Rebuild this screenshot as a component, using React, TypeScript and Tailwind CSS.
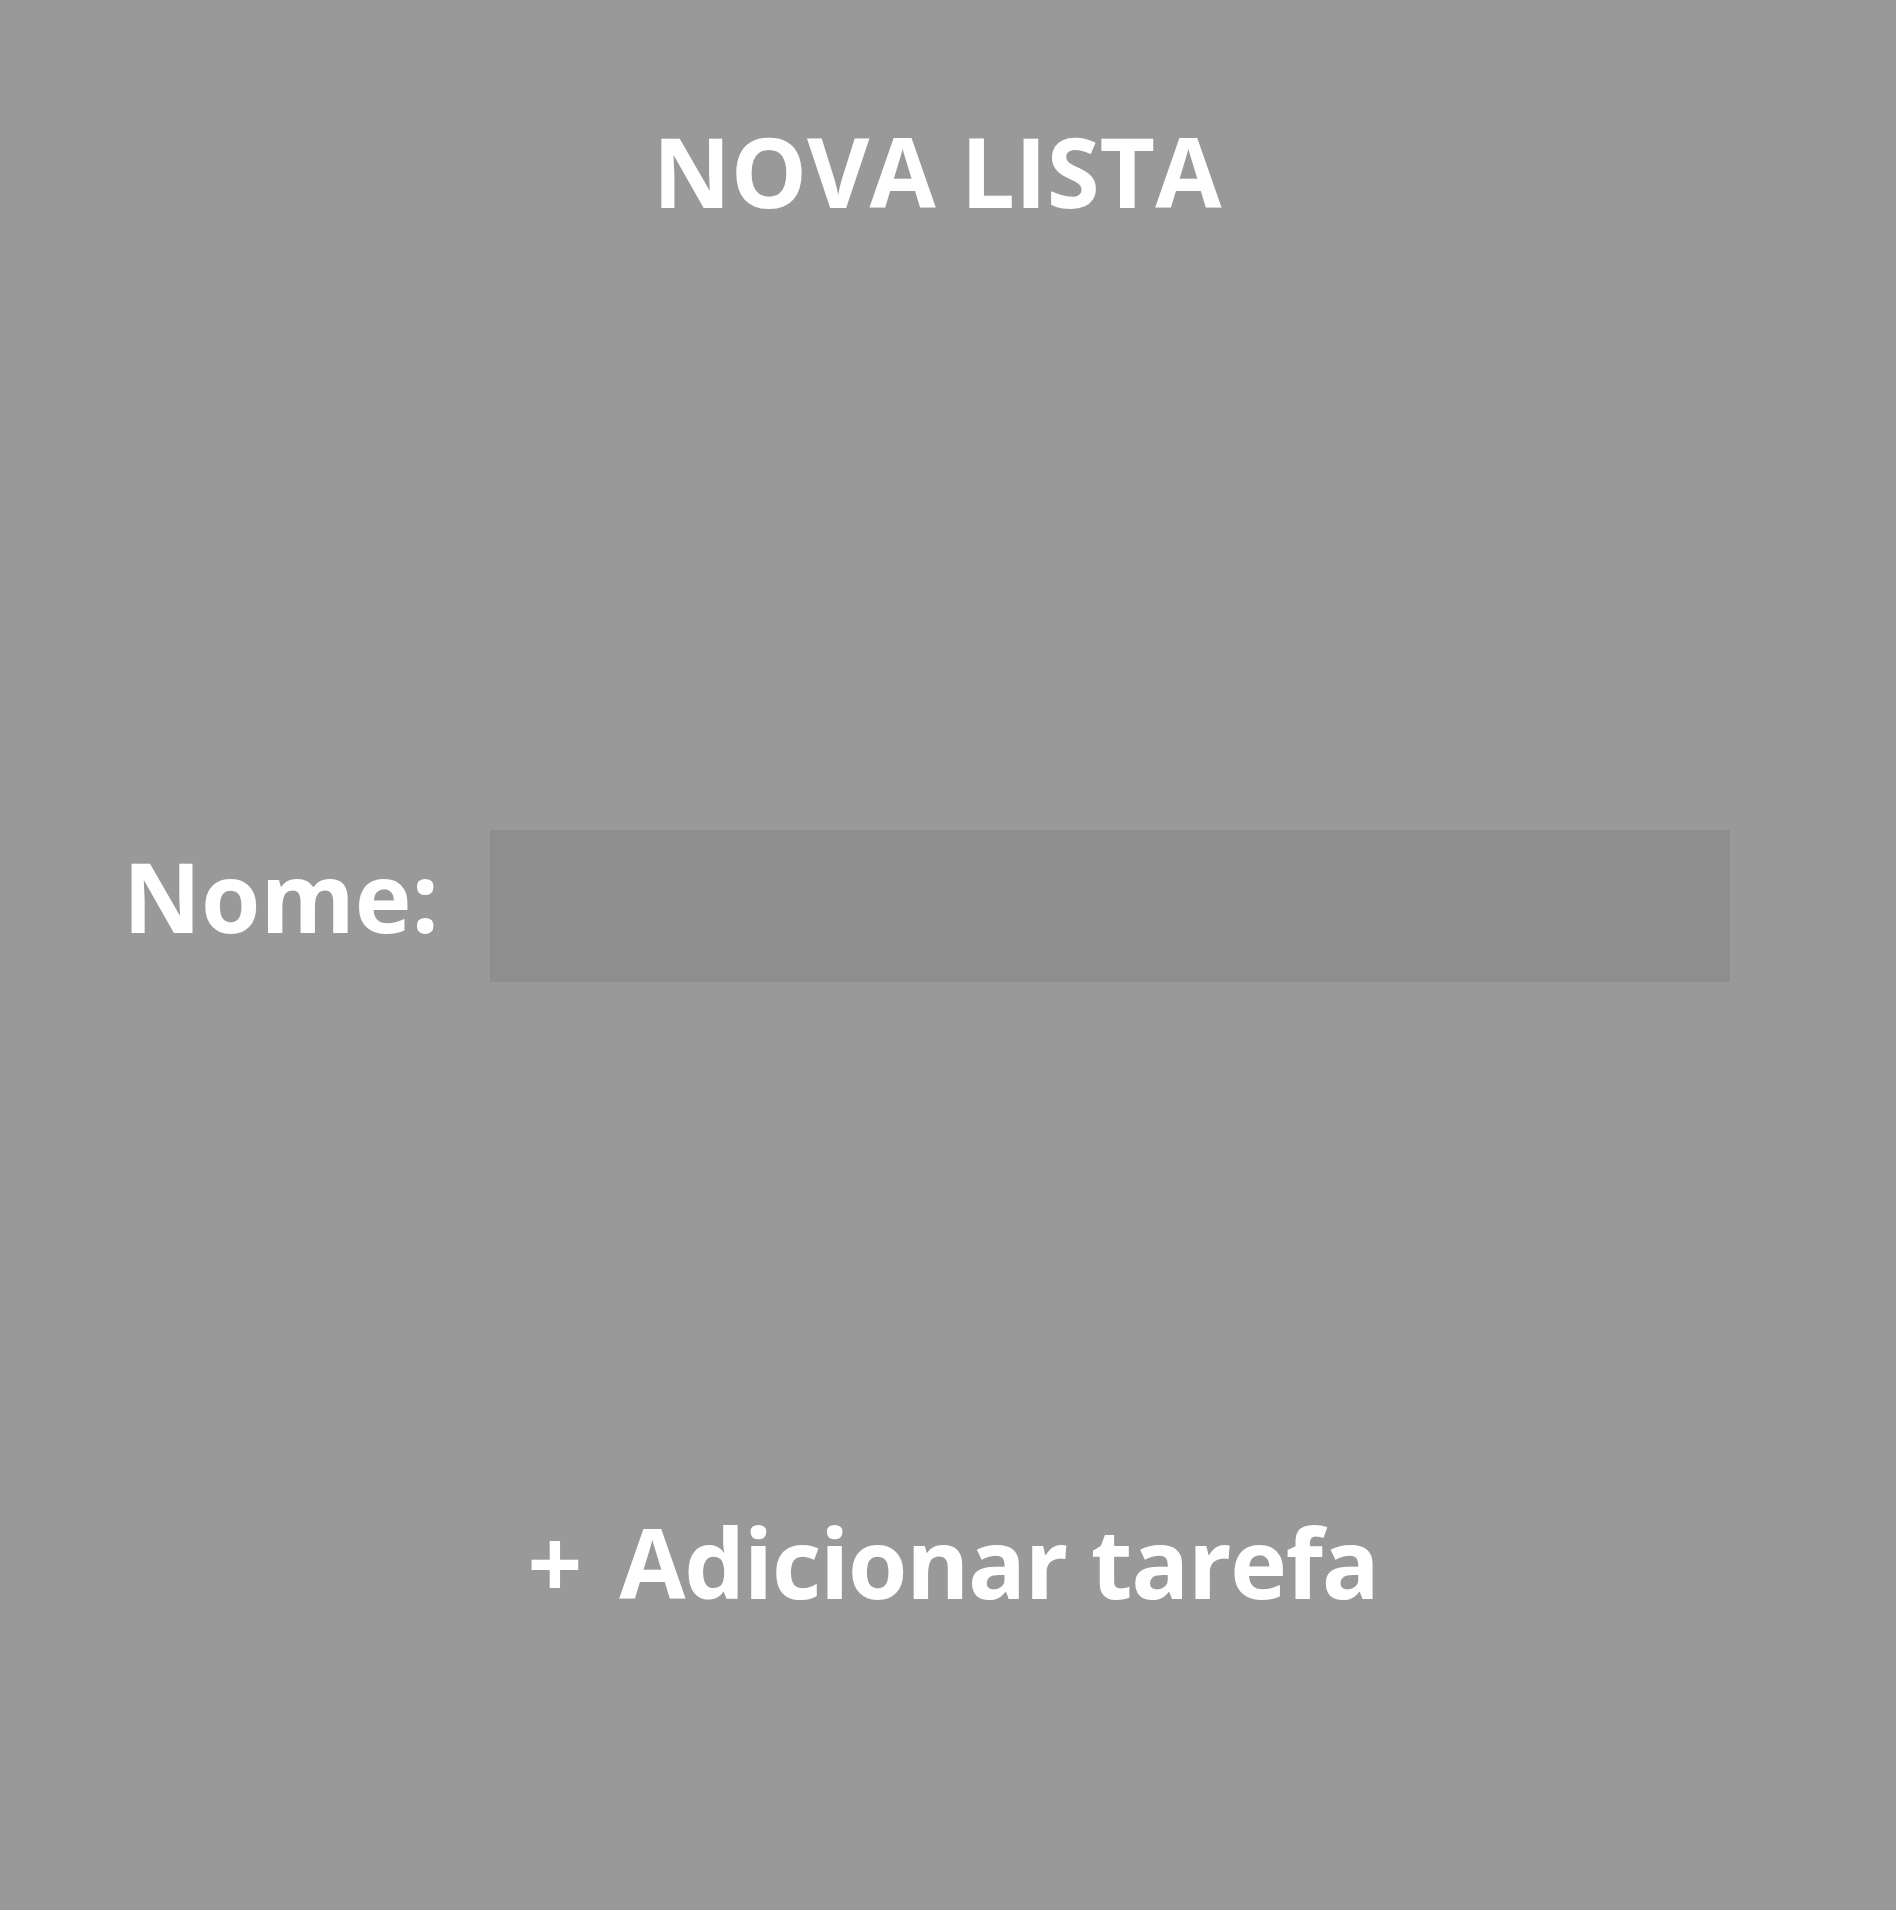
export default function App() {
  return (
    <div
      className="w-[1896px] h-[1910px] bg-[#999999] flex flex-col text-white"
      style={{ fontFamily: '"Open Sans", "Noto Sans", sans-serif' }}
    >
      <h1 className="mt-[123px] pr-[22px] text-center text-[96px] leading-none font-bold">NOVA LISTA</h1>
      <div className="mt-[611px] flex items-center pl-[123px]">
        <label className="text-[96px] leading-none font-bold mb-[20px] w-[367px]">Nome:</label>
        <input
          type="text"
          aria-label="Nome"
          className="w-[1240px] h-[152px] bg-[#8e8e8e] outline-none border-0 text-white text-[48px] px-4"
        />
      </div>
      <button className="mt-[532px] ml-[10px] self-center text-[96px] leading-none font-bold text-white bg-transparent whitespace-nowrap">
        <span>+</span> <span className="ml-[12px] tracking-[-1.25px]">Adicionar tarefa</span>
      </button>
    </div>
  );
}
